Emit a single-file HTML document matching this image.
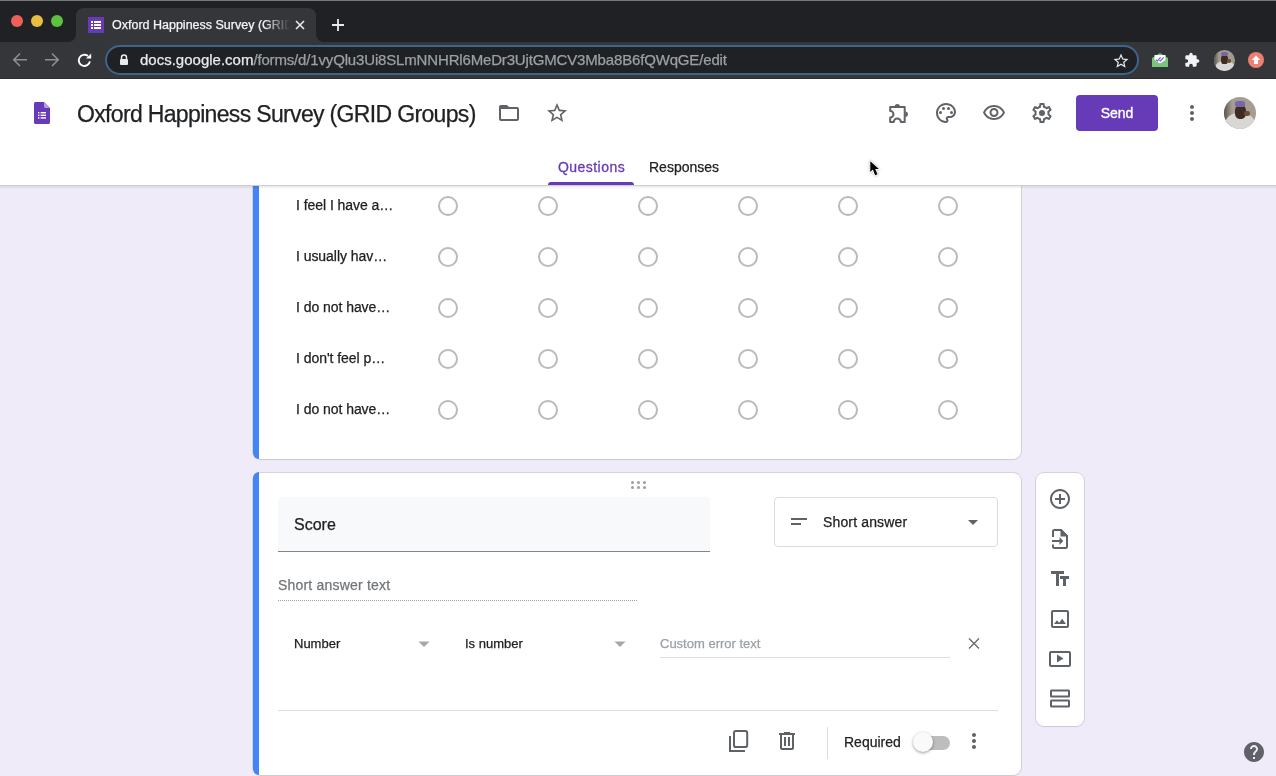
<!DOCTYPE html>
<html><head><meta charset="utf-8">
<style>
*{box-sizing:border-box;margin:0;padding:0}
html,body{width:1276px;height:776px;overflow:hidden}
body{position:relative;background:#f0ebf8;font-family:"Liberation Sans",sans-serif;color:#202124}
.a{position:absolute}
.t{position:absolute;line-height:1;white-space:nowrap;will-change:transform;-webkit-text-stroke:0.25px currentColor}
svg{display:block;position:absolute}
#titlebar{left:0;top:0;width:1276px;height:42px;background:#202124;border-top:1px solid #78787a}
#tab{left:76px;top:8px;width:240px;height:34px;background:#35363a;border-radius:8px 8px 0 0}
#toolbar{left:0;top:42px;width:1276px;height:37px;background:#35363a;border-bottom:1px solid #2b2c2f}
#omni{left:105px;top:45px;width:1034px;height:30px;background:#202124;border:2px solid #3e6489;border-radius:15px}
#header{left:0;top:79px;width:1276px;height:106px;background:#fff}
#hline{left:0;top:185px;width:1276px;height:1px;background:#cfcfd2}
#hshadow{left:0;top:186px;width:1276px;height:3px;background:linear-gradient(rgba(0,0,0,.09),rgba(0,0,0,0))}
.card{position:absolute;background:#fff;border-radius:8px;box-shadow:0 0 0 1px rgba(0,0,0,.1),0 1px 2px rgba(0,0,0,.05)}
.bluebar{position:absolute;background:#4285f4}
.row{font-size:14px;color:#202124;left:296px;letter-spacing:-0.05px}
.radio{position:absolute;width:20px;height:20px;border:2px solid #bababa;border-radius:50%}
.g{fill:#5f6368}
</style></head>
<body>

<!-- ============ CARD 1 (scrolled, top hidden under header) ============ -->
<div class="card" style="left:253px;top:120px;width:768px;height:339px"></div>
<div class="bluebar" style="left:253px;top:120px;width:6px;height:339px;border-radius:0 0 0 8px"></div>

<div class="t row" style="top:198px">I feel I have a…</div>
<div class="t row" style="top:249px">I usually hav…</div>
<div class="t row" style="top:300px">I do not have…</div>
<div class="t row" style="top:351px">I don't feel p…</div>
<div class="t row" style="top:402px">I do not have…</div>
<div id="radios"><div class="radio" style="left:438px;top:196px"></div><div class="radio" style="left:538px;top:196px"></div><div class="radio" style="left:638px;top:196px"></div><div class="radio" style="left:738px;top:196px"></div><div class="radio" style="left:838px;top:196px"></div><div class="radio" style="left:938px;top:196px"></div><div class="radio" style="left:438px;top:247px"></div><div class="radio" style="left:538px;top:247px"></div><div class="radio" style="left:638px;top:247px"></div><div class="radio" style="left:738px;top:247px"></div><div class="radio" style="left:838px;top:247px"></div><div class="radio" style="left:938px;top:247px"></div><div class="radio" style="left:438px;top:298px"></div><div class="radio" style="left:538px;top:298px"></div><div class="radio" style="left:638px;top:298px"></div><div class="radio" style="left:738px;top:298px"></div><div class="radio" style="left:838px;top:298px"></div><div class="radio" style="left:938px;top:298px"></div><div class="radio" style="left:438px;top:349px"></div><div class="radio" style="left:538px;top:349px"></div><div class="radio" style="left:638px;top:349px"></div><div class="radio" style="left:738px;top:349px"></div><div class="radio" style="left:838px;top:349px"></div><div class="radio" style="left:938px;top:349px"></div><div class="radio" style="left:438px;top:400px"></div><div class="radio" style="left:538px;top:400px"></div><div class="radio" style="left:638px;top:400px"></div><div class="radio" style="left:738px;top:400px"></div><div class="radio" style="left:838px;top:400px"></div><div class="radio" style="left:938px;top:400px"></div></div>

<!-- ============ CARD 2 ============ -->
<div class="card" style="left:253px;top:473px;width:768px;height:302px"></div>
<div class="bluebar" style="left:253px;top:472px;width:6px;height:303px;border-radius:8px 0 0 8px"></div>

<!-- drag handle -->
<svg style="left:630px;top:480px" width="17" height="10" viewBox="0 0 17 10">
 <g fill="#9e9e9e"><circle cx="2.5" cy="2.5" r="1.5"/><circle cx="8.5" cy="2.5" r="1.5"/><circle cx="14.5" cy="2.5" r="1.5"/><circle cx="2.5" cy="7.5" r="1.5"/><circle cx="8.5" cy="7.5" r="1.5"/><circle cx="14.5" cy="7.5" r="1.5"/></g>
</svg>

<!-- title field -->
<div class="a" style="left:278px;top:497px;width:432px;height:55px;background:#f8f9fa;border-radius:4px 4px 0 0;border-bottom:1px solid #80868b"></div>
<div class="t" style="left:294px;top:516.5px;font-size:16px;color:#202124">Score</div>

<!-- type dropdown -->
<div class="a" style="left:774px;top:497px;width:224px;height:50px;border:1px solid #dadce0;border-radius:4px"></div>
<svg style="left:789px;top:515px" width="20" height="12" viewBox="0 0 20 12"><g fill="#5f6368"><rect x="2" y="3" width="16" height="2"/><rect x="2" y="8" width="10" height="2"/></g></svg>
<div class="t" style="left:823px;top:514.8px;font-size:14px;letter-spacing:0.15px;color:#202124">Short answer</div>
<svg style="left:967px;top:519px" width="12" height="7" viewBox="0 0 12 7"><path d="M1 1h10L6 6z" fill="#5f6368"/></svg>

<!-- short answer text -->
<div class="t" style="left:278px;top:578.2px;font-size:14px;letter-spacing:0.2px;color:#70757a">Short answer text</div>
<div class="a" style="left:278px;top:600px;width:360px;height:1px;background-image:linear-gradient(90deg,#9aa0a6 50%,transparent 50%);background-size:2px 1px"></div>

<!-- validation row -->
<div class="t" style="left:294px;top:637.1px;font-size:13px;color:#202124">Number</div>
<svg style="left:418px;top:641px" width="12" height="7" viewBox="0 0 12 7"><path d="M0.5 0.5h11L6 6z" fill="#a7a7a7"/></svg>
<div class="t" style="left:464.5px;top:637.1px;font-size:13px;color:#202124">Is number</div>
<svg style="left:614px;top:641px" width="12" height="7" viewBox="0 0 12 7"><path d="M0.5 0.5h11L6 6z" fill="#a7a7a7"/></svg>
<div class="t" style="left:660px;top:637.2px;font-size:13px;color:#9aa0a6">Custom error text</div>
<div class="a" style="left:660px;top:657px;width:290px;height:1px;background:#dadce0"></div>
<svg style="left:966px;top:636px" width="16" height="16" viewBox="0 0 16 16"><path d="M3 2.5L13 12.5M13 2.5L3 12.5" stroke="#686c71" stroke-width="1.4"/></svg>

<!-- divider -->
<div class="a" style="left:278px;top:710px;width:720px;height:1px;background:#dadce0"></div>

<!-- footer -->
<svg style="left:729px;top:730px" width="20" height="22" viewBox="0 0 20 22"><g fill="none" stroke="#5f6368" stroke-width="2"><rect x="5" y="1" width="13.2" height="16" rx="1.8"/><path d="M1 6v15h15"/></g></svg>
<svg style="left:775px;top:729px" width="24" height="24" viewBox="0 0 24 24"><path class="g" d="M15 4V3H9v1H4v2h1v13c0 1.1.9 2 2 2h10c1.1 0 2-.9 2-2V6h1V4h-5zm2 15H7V6h10v13zM9 8h2v9H9zm4 0h2v9h-2z"/></svg>
<div class="a" style="left:827px;top:727px;width:1px;height:32px;background:#dadce0"></div>
<div class="t" style="left:843.6px;top:735.2px;font-size:14px;color:#202124">Required</div>
<div class="a" style="left:918px;top:736px;width:32px;height:14px;border-radius:7px;background:#bdbdbd"></div>
<div class="a" style="left:913px;top:732px;width:20px;height:20px;border-radius:50%;background:#fafafa;box-shadow:0 1px 3px rgba(0,0,0,.4)"></div>
<svg style="left:962px;top:729px" width="24" height="24" viewBox="0 0 24 24"><path class="g" d="M12 8c1.1 0 2-.9 2-2s-.9-2-2-2-2 .9-2 2 .9 2 2 2zm0 2c-1.1 0-2 .9-2 2s.9 2 2 2 2-.9 2-2-.9-2-2-2zm0 6c-1.1 0-2 .9-2 2s.9 2 2 2 2-.9 2-2-.9-2-2-2z"/></svg>

<!-- ============ SIDE TOOLBAR ============ -->
<div class="card" style="left:1036px;top:473px;width:48px;height:253px"></div>
<svg style="left:1048px;top:487px" width="24" height="24" viewBox="0 0 24 24"><path class="g" d="M13 7h-2v4H7v2h4v4h2v-4h4v-2h-4V7zm-1-5C6.48 2 2 6.48 2 12s4.48 10 10 10 10-4.48 10-10S17.52 2 12 2zm0 18c-4.41 0-8-3.59-8-8s3.59-8 8-8 8 3.59 8 8-3.59 8-8 8z"/></svg>
<svg style="left:1048px;top:527px" width="24" height="24" viewBox="0 0 24 24"><path d="M5 10V4.5Q5 3 6.5 3H13l6 6v10.5Q19 21 17.5 21H6.5Q5 21 5 19.5V17.5" fill="none" stroke="#5f6368" stroke-width="2"/><path d="M12.5 2.2h0.8l6.5 6.5v0.8h-7.3z" fill="#5f6368"/><path d="M4 13h7.5v-3l3.8 4-3.8 4v-3H4z" fill="#5f6368"/></svg>
<svg style="left:1048px;top:567px" width="24" height="24" viewBox="0 0 24 24"><path class="g" d="M3 4v3h5v12h3V7h5V4H3zm18 5h-9v3h3v7h3v-7h3V9z"/></svg>
<svg style="left:1048px;top:607px" width="24" height="24" viewBox="0 0 24 24"><path class="g" d="M19 5v14H5V5h14m0-2H5c-1.1 0-2 .9-2 2v14c0 1.1.9 2 2 2h14c1.1 0 2-.9 2-2V5c0-1.1-.9-2-2-2zm-4.86 8.86l-3 3.87L9 13.14 6 17h12l-3.86-5.14z"/></svg>
<svg style="left:1048px;top:647px" width="24" height="24" viewBox="0 0 24 24"><rect x="2" y="5" width="20" height="14" rx="1" fill="none" stroke="#5f6368" stroke-width="2"/><path d="M9 7.5v8l6.5-4z" fill="#5f6368"/></svg>
<svg style="left:1048px;top:687px" width="24" height="24" viewBox="0 0 24 24"><g fill="none" stroke="#5f6368" stroke-width="2"><rect x="3" y="3.5" width="18" height="6" rx=".5"/><rect x="3" y="13.5" width="18" height="6" rx=".5"/></g></svg>

<!-- help -->
<svg style="left:1242px;top:740px" width="24" height="24" viewBox="0 0 24 24"><path fill="#5f6368" d="M12 2C6.48 2 2 6.48 2 12s4.48 10 10 10 10-4.48 10-10S17.52 2 12 2zm1 17h-2v-2h2v2zm2.07-7.75l-.9.92C13.45 12.9 13 13.5 13 15h-2v-.5c0-1.1.45-2.1 1.170-2.83l1.24-1.26c.37-.36.59-.86.59-1.41 0-1.1-.9-2-2-2s-2 .9-2 2H8c0-2.21 1.790-4 4-4s4 1.79 4 4c0 .88-.36 1.68-.93 2.25z"/></svg>

<!-- ============ FORMS HEADER ============ -->
<div id="header" class="a"></div>
<div id="hline" class="a"></div>
<div id="hshadow" class="a"></div>

<!-- forms logo -->
<svg style="left:34px;top:102px" width="16" height="22" viewBox="0 0 16 22">
 <path d="M10 0H1.5C.7 0 0 .7 0 1.5v19C0 21.3.7 22 1.5 22h13c.8 0 1.5-.7 1.5-1.5V6z" fill="#673ab7"/>
 <path d="M10 0v4.5c0 .8.7 1.5 1.5 1.5H16z" fill="#b39ddb"/>
 <g fill="#fff"><rect x="4" y="10" width="1.4" height="1.4"/><rect x="4" y="12.6" width="1.4" height="1.4"/><rect x="4" y="15.2" width="1.4" height="1.4"/><rect x="6.6" y="10" width="5.4" height="1.4"/><rect x="6.6" y="12.6" width="5.4" height="1.4"/><rect x="6.6" y="15.2" width="5.4" height="1.4"/></g>
</svg>
<div class="t" style="left:76.5px;top:103.2px;font-size:23px;letter-spacing:-0.66px;color:#202124">Oxford Happiness Survey (GRID Groups)</div>
<svg style="left:497px;top:101px" width="24" height="24" viewBox="0 0 24 24"><path class="g" d="M20 6h-8l-2-2H4c-1.1 0-2 .9-2 2v12c0 1.1.9 2 2 2h16c1.1 0 2-.9 2-2V8c0-1.1-.9-2-2-2zm0 12H4V8h16v10z"/></svg>
<svg style="left:545px;top:101px" width="24" height="24" viewBox="0 0 24 24"><path class="g" d="M22 9.24l-7.19-.62L12 2 9.19 8.63 2 9.24l5.46 4.73L5.82 21 12 17.27 18.18 21l-1.63-7.03L22 9.24zM12 15.4l-3.76 2.27 1-4.28-3.32-2.88 4.38-.38L12 6.1l1.71 4.04 4.38.38-3.32 2.88 1 4.28L12 15.4z"/></svg>

<!-- right header icons -->
<svg style="left:886px;top:101px" width="24" height="24" viewBox="0 0 24 24"><path d="M4.2 6.1H18.7V20.9H14.8A3.5 3.5 0 0 0 7.8 20.9H4.2V16.6A3.3 3.3 0 0 0 4.2 10Z" fill="none" stroke="#5f6368" stroke-width="2" stroke-linejoin="round"/><path d="M8.7 5.6A2.6 2.6 0 0 1 13.9 5.6ZM19.3 10.6A2.6 2.6 0 0 1 19.3 15.8Z" fill="#5f6368"/></svg>
<svg style="left:934px;top:101px" width="24" height="24" viewBox="0 0 24 24"><path class="g" d="M12 22C6.49 22 2 17.51 2 12S6.49 2 12 2s10 4.04 10 9c0 3.31-2.69 6-6 6h-1.77c-.28 0-.5.22-.5.5 0 .12.05.23.13.33.41.47.64 1.06.64 1.67 0 1.38-1.12 2.5-2.5 2.5zm0-18c-4.41 0-8 3.59-8 8s3.59 8 8 8c.28 0 .5-.22.5-.5 0-.16-.08-.28-.14-.35-.41-.46-.63-1.05-.63-1.65 0-1.38 1.12-2.5 2.5-2.5H16c2.21 0 4-1.79 4-4 0-3.860-3.59-7-8-7z"/><circle class="g" cx="6.5" cy="11.5" r="1.5"/><circle class="g" cx="9.5" cy="7.5" r="1.5"/><circle class="g" cx="14.5" cy="7.5" r="1.5"/><circle class="g" cx="17.5" cy="11.5" r="1.5"/></svg>
<svg style="left:982px;top:101px" width="24" height="24" viewBox="0 0 24 24"><path class="g" d="M12 6c3.79 0 7.17 2.13 8.82 5.5C19.17 14.87 15.79 17 12 17s-7.17-2.13-8.82-5.5C4.83 8.13 8.21 6 12 6m0-2C7 4 2.73 7.11 1 11.5 2.73 15.89 7 19 12 19s9.27-3.11 11-7.5C21.27 7.11 17 4 12 4zm0 5c1.38 0 2.5 1.12 2.5 2.5S13.38 14 12 14s-2.5-1.12-2.5-2.5S10.62 9 12 9m0-2c-2.48 0-4.5 2.02-4.5 4.5S9.52 16 12 16s4.5-2.02 4.5-4.5S14.48 7 12 7z"/></svg>
<svg style="left:1030px;top:101px" width="24" height="24" viewBox="0 0 24 24"><path class="g" d="M19.43 12.98c.04-.32.07-.64.07-.98 0-.34-.03-.66-.07-.98l2.11-1.65c.19-.15.24-.42.12-.64l-2-3.46c-.09-.16-.26-.25-.44-.25-.06 0-.12.01-.17.03l-2.49 1c-.52-.4-1.08-.73-1.69-.98l-.38-2.65C14.46 2.18 14.25 2 14 2h-4c-.25 0-.46.18-.49.42l-.38 2.65c-.61.25-1.17.59-1.69.98l-2.49-1c-.06-.02-.12-.03-.18-.03-.17 0-.34.09-.43.25l-2 3.46c-.13.22-.07.49.12.64l2.11 1.65c-.04.32-.07.65-.07.98 0 .33.03.66.07.98l-2.11 1.65c-.19.15-.24.42-.12.64l2 3.46c.09.16.26.25.44.25.06 0 .12-.01.17-.03l2.49-1c.52.4 1.08.73 1.69.98l.38 2.65c.03.24.24.42.49.42h4c.25 0 .46-.18.49-.42l.38-2.65c.61-.25 1.17-.59 1.69-.98l2.49 1c.06.02.12.03.18.03.17 0 .34-.09.43-.25l2-3.46c.12-.22.07-.49-.12-.64l-2.11-1.65zm-1.98-1.71c.04.31.05.52.05.73 0 .21-.02.43-.05.73l-.14 1.13.89.7 1.08.84-.7 1.21-1.27-.51-1.04-.42-.9.68c-.43.32-.84.56-1.25.73l-1.06.43-.16 1.13-.2 1.35h-1.4l-.19-1.35-.16-1.13-1.06-.43c-.43-.18-.83-.41-1.23-.71l-.91-.7-1.06.43-1.27.51-.7-1.21 1.08-.84.89-.7-.14-1.13c-.03-.31-.05-.54-.05-.74s.02-.43.05-.73l.14-1.13-.89-.7-1.08-.84.7-1.21 1.27.51 1.04.42.9-.68c.43-.32.84-.56 1.25-.73l1.06-.43.16-1.13.2-1.35h1.39l.19 1.35.16 1.13 1.06.43c.43.18.83.41 1.23.71l.91.7 1.06-.43 1.27-.51.7 1.21-1.07.85-.89.7.14 1.13z"/><circle class="g" cx="12" cy="12" r="3"/></svg>

<!-- send -->
<div class="a" style="left:1076px;top:95px;width:82px;height:36px;background:#673ab7;border-radius:4px"></div>
<div class="t" style="left:1076px;width:82px;text-align:center;top:106.2px;font-size:14px;-webkit-text-stroke:0.35px #fff;color:#fff">Send</div>
<svg style="left:1180px;top:101px" width="24" height="24" viewBox="0 0 24 24"><path class="g" d="M12 8c1.1 0 2-.9 2-2s-.9-2-2-2-2 .9-2 2 .9 2 2 2zm0 2c-1.1 0-2 .9-2 2s.9 2 2 2 2-.9 2-2-.9-2-2-2zm0 6c-1.1 0-2 .9-2 2s.9 2 2 2 2-.9 2-2-.9-2-2-2z"/></svg>
<!-- avatar -->
<div class="a" style="left:1224px;top:97px;width:32px;height:32px;border-radius:50%;overflow:hidden;background:#a69d90">
 <div class="a" style="left:0;top:0;width:8px;height:32px;background:linear-gradient(90deg,#5a544e,#a69d90)"></div>
 <div class="a" style="left:1px;top:16px;width:30px;height:24px;border-radius:45%;background:#d9d7d5"></div>
 <div class="a" style="left:11px;top:8px;width:11px;height:14px;border-radius:40%;background:#3f2b22"></div>
 <div class="a" style="left:11px;top:3.5px;width:10px;height:6px;border-radius:35%;background:#7467b0"></div>
 <div class="a" style="left:20px;top:14px;width:6px;height:5px;border-radius:40%;background:#6e4a3a"></div>
</div>

<!-- tabs -->
<div class="t" style="left:558px;top:159.8px;font-size:14px;-webkit-text-stroke:0.3px #673ab7;letter-spacing:0.45px;color:#673ab7">Questions</div>
<div class="t" style="left:649px;top:159.8px;font-size:14px;color:#202124">Responses</div>
<div class="a" style="left:548px;top:182px;width:86px;height:3px;background:#673ab7;border-radius:3px 3px 0 0"></div>

<!-- cursor -->
<svg style="left:860px;top:150px" width="30" height="35" viewBox="0 0 30 35"><path d="M10.3 11.2V22L12.9 19.6 15.1 25.2 17.5 24.2 15.2 19H18.9z" fill="#000" stroke="#fff" stroke-width="1.6" stroke-linejoin="round" paint-order="stroke" style="filter:drop-shadow(0 0.5px 0.8px rgba(0,0,0,.35))"/></svg>

<!-- ============ CHROME ============ -->
<div id="titlebar" class="a"></div>
<div class="a" style="left:11px;top:15px;width:12px;height:12px;border-radius:50%;background:#ee5f57"></div>
<div class="a" style="left:31px;top:15px;width:12px;height:12px;border-radius:50%;background:#e9bd3f"></div>
<div class="a" style="left:51px;top:15px;width:12px;height:12px;border-radius:50%;background:#5dc240"></div>
<div id="tab" class="a"></div>
<svg style="left:68px;top:34px" width="8" height="8" viewBox="0 0 8 8"><path d="M8 0v8H0a8 8 0 0 0 8-8z" fill="#35363a"/></svg>
<svg style="left:316px;top:34px" width="8" height="8" viewBox="0 0 8 8"><path d="M0 0v8h8a8 8 0 0 1-8-8z" fill="#35363a"/></svg>
<svg style="left:88px;top:17px" width="16" height="16" viewBox="0 0 16 16"><rect width="16" height="16" fill="#673ab7"/><g fill="#fff"><rect x="3" y="4" width="2" height="2"/><rect x="3" y="7" width="2" height="2"/><rect x="3" y="10" width="2" height="2"/><rect x="6" y="4" width="7" height="2"/><rect x="6" y="7" width="7" height="2"/><rect x="6" y="10" width="7" height="2"/></g></svg>
<div class="t" style="left:112px;top:18.6px;font-size:12.5px;color:#f4f5f6;width:178px;overflow:hidden;-webkit-mask-image:linear-gradient(90deg,#000 85%,transparent)">Oxford Happiness Survey (GRID Groups)</div>
<svg style="left:294px;top:19px" width="12" height="12" viewBox="0 0 12 12"><path d="M2 2l8 8M10 2l-8 8" stroke="#e8eaed" stroke-width="1.6"/></svg>
<svg style="left:331px;top:18px" width="14" height="14" viewBox="0 0 14 14"><path d="M7 1v12M1 7h12" stroke="#e8eaed" stroke-width="1.8"/></svg>

<div id="toolbar" class="a"></div>
<svg style="left:12px;top:52px" width="16" height="16" viewBox="0 0 16 16"><path d="M15 7.75H2.5M8 1.5L1.75 7.75 8 14" fill="none" stroke="#8d8e91" stroke-width="1.6"/></svg>
<svg style="left:44px;top:52px" width="16" height="16" viewBox="0 0 16 16"><path d="M1 7.75H13.5M8 1.5l6.25 6.25L8 14" fill="none" stroke="#8d8e91" stroke-width="1.6"/></svg>
<svg style="left:76px;top:52px" width="18" height="18" viewBox="0 0 18 18"><path d="M11.9 4.0A5.6 5.6 0 1 0 13.9 9.3" fill="none" stroke="#fff" stroke-width="1.9"/><path d="M15.2 1.4v5.1H10z" fill="#fff"/></svg>
<div id="omni" class="a"></div>
<svg style="left:118px;top:53px" width="12" height="14" viewBox="0 0 12 14"><path d="M3.5 6V4.5a2.5 2.5 0 0 1 5 0V6" fill="none" stroke="#e8eaed" stroke-width="1.5"/><rect x="2" y="6" width="8" height="6" rx="1" fill="#e8eaed"/></svg>
<div class="t" style="left:140px;top:52.3px;font-size:15px;color:#e8eaed">docs.google.com<span style="color:#9aa0a6;letter-spacing:-0.16px">/forms/d/1vyQlu3Ui8SLmNNHRl6MeDr3UjtGMCV3Mba8B6fQWqGE/edit</span></div>
<svg style="left:1111.5px;top:51.5px" width="18" height="18" viewBox="0 0 24 24"><path fill="#e8eaed" d="M22 9.24l-7.19-.62L12 2 9.19 8.63 2 9.24l5.46 4.73L5.82 21 12 17.27 18.18 21l-1.63-7.03L22 9.24zM12 15.4l-3.76 2.270 1-4.28-3.32-2.88 4.38-.38L12 6.1l1.71 4.04 4.38.38-3.32 2.88 1 4.28L12 15.4z"/></svg>
<!-- extensions -->
<svg style="left:1151px;top:52px" width="18" height="16" viewBox="0 0 18 16"><path d="M1 6l8-5 8 5v9H1z" fill="#6cbf72"/><path d="M3.5 3h11v7l-5.5 3-5.5-3z" fill="#fff"/><path d="M4.8 7.6l1.6 1.4 3.2-3.6M8.4 8.4l0.9 0.6 3.4-3.6" fill="none" stroke="#7a5cd0" stroke-width="1.2"/><path d="M1 6.5l8 5 8-5V15H1z" fill="#7ac47f"/></svg>
<svg style="left:1183.7px;top:52.3px" width="16" height="16" viewBox="0 0 24 24"><path fill="#f1f3f4" d="M20.5 11H19V7c0-1.1-.9-2-2-2h-4V3.5C13 2.12 11.88 1 10.5 1S8 2.12 8 3.5V5H4c-1.1 0-1.99.9-1.99 2v3.8H3.5c1.49 0 2.7 1.21 2.7 2.7s-1.21 2.7-2.7 2.7H2V20c0 1.1.9 2 2 2h3.8v-1.5c0-1.49 1.21-2.7 2.7-2.7 1.49 0 2.7 1.21 2.7 2.7V22H17c1.1 0 2-.9 2-2v-4h1.5c1.38 0 2.5-1.12 2.5-2.5S21.88 11 20.5 11z"/></svg>
<div class="a" style="left:1213.5px;top:49.5px;width:21.5px;height:21.5px;border-radius:50%;overflow:hidden;background:#a49b8f">
 <div class="a" style="left:0;top:0;width:5px;height:22px;background:linear-gradient(90deg,#5a544e,#a49b8f)"></div>
 <div class="a" style="left:1px;top:11px;width:20px;height:16px;border-radius:45%;background:#d9d7d5"></div>
 <div class="a" style="left:7.5px;top:5.5px;width:7px;height:9px;border-radius:40%;background:#3f2b22"></div>
 <div class="a" style="left:7.5px;top:2.5px;width:7px;height:4px;border-radius:35%;background:#7467b0"></div>
 <div class="a" style="left:13.5px;top:9.5px;width:4px;height:3.5px;border-radius:40%;background:#6e4a3a"></div>
</div>
<svg style="left:1248px;top:52px" width="16" height="16" viewBox="0 0 16 16"><circle cx="8" cy="8" r="8" fill="#ed8074"/><path d="M8 3.5L3.8 8H6v4h4V8h2.2z" fill="#fff"/></svg>

</body></html>
